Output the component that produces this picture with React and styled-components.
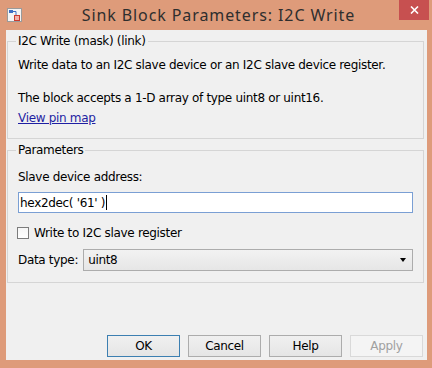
import React from 'react';
import styled, { createGlobalStyle } from 'styled-components';

const GlobalStyle = createGlobalStyle`
  html, body {
    margin: 0;
    padding: 0;
    background: #de9b7a;
  }
`;

const Window = styled.div`
  width: 432px;
  height: 368px;
  box-sizing: border-box;
  background: #de9b7a;
  display: flex;
  flex-direction: column;
  padding: 0 5px 8px 6px;
  font-family: 'DejaVu Sans', 'Liberation Sans', sans-serif;
  font-size: 12px;
  letter-spacing: -0.32px;
  color: #000;
`;

const TitleBar = styled.div`
  height: 30px;
  display: grid;
  grid-template-columns: 1fr auto 1fr;
  align-items: start;
  margin-right: -4px;
`;

const AppIcon = styled.svg`
  margin: 8px 0 0 1px;
  display: block;
`;

const Title = styled.div`
  font-family: 'Noto Sans', 'Open Sans', sans-serif;
  font-size: 16px;
  letter-spacing: 0.9px;
  color: #2e2e2e;
  line-height: 20px;
  padding-top: 5px;
  white-space: nowrap;
`;

const CloseButton = styled.div`
  justify-self: end;
  width: 30px;
  height: 20px;
  background: #c75050;
  color: #fff;
  display: flex;
  align-items: center;
  justify-content: center;
  margin-right: 2px;
`;

const Client = styled.div`
  flex: 1;
  background: #f0f0f0;
  display: flex;
  flex-direction: column;
  padding-top: 3px;
`;

const Group = styled.fieldset`
  margin: ${(p) => p.$top}px 3px 0 1px;
  padding: ${(p) => p.$padTop}px 10px ${(p) => p.$padBottom}px 10px;
  border: 1px solid #d5d5d5;
  min-width: 0;
`;

const Legend = styled.legend`
  padding: 0 2px;
  margin-left: -2px;
  line-height: 16px;
`;

const Line = styled.div`
  line-height: 16px;
  margin-top: ${(p) => p.$gap || 0}px;
  white-space: nowrap;
`;

const Link = styled.span`
  color: #1f1fa3;
  text-decoration: underline;
`;

const TextField = styled.div`
  margin-top: 7px;
  height: 21px;
  box-sizing: border-box;
  border: 1px solid #7a9fd4;
  background: #fff;
  padding: 0 1px;
  display: flex;
  align-items: center;
`;

const Caret = styled.span`
  display: inline-block;
  width: 1px;
  height: 15px;
  background: #000;
  margin-left: 1px;
`;

const CheckRow = styled.div`
  margin-top: 12px;
  height: 16px;
  display: flex;
  align-items: center;
`;

const CheckBox = styled.span`
  width: 12px;
  height: 12px;
  box-sizing: border-box;
  border: 1px solid #7c7c7c;
  background: linear-gradient(#f6f6f6, #ffffff);
  margin-left: -1px;
  margin-right: 5px;
`;

const SelectRow = styled.div`
  margin-top: 8px;
  display: flex;
  align-items: center;
  gap: 5px;
`;

const Select = styled.div`
  flex: 1;
  height: 22px;
  box-sizing: border-box;
  border: 1px solid #acacac;
  background: linear-gradient(#f2f2f2, #e6e6e6);
  display: flex;
  align-items: center;
  justify-content: space-between;
  padding: 0 6px 0 4px;
`;

const Arrow = styled.span`
  width: 0;
  height: 0;
  border-left: 3.5px solid transparent;
  border-right: 3.5px solid transparent;
  border-top: 4px solid #000;
`;

const Spacer = styled.div`
  flex: 1;
`;

const ButtonRow = styled.div`
  display: flex;
  justify-content: flex-end;
  gap: 8px;
  padding-right: 4px;
  margin-bottom: 3px;
`;

const Button = styled.div`
  width: 73px;
  height: 22px;
  box-sizing: border-box;
  display: flex;
  align-items: center;
  justify-content: center;
  border: 1px solid ${(p) => (p.$default ? '#3c7fb1' : p.$disabled ? '#d9d9d9' : '#acacac')};
  background: ${(p) => (p.$disabled ? '#f4f4f4' : 'linear-gradient(#f0f0f0, #e5e5e5)')};
  color: ${(p) => (p.$disabled ? '#a0a0a0' : '#000')};
`;

export default function App() {
  return (
    <Window>
      <GlobalStyle />
      <TitleBar>
        <AppIcon width="15" height="14" viewBox="0 0 15 14">
          <rect x="0.5" y="0.5" width="14" height="13" fill="#f4f4f4" stroke="#9a9a9a" />
          <rect x="2" y="2" width="4" height="3" fill="#3d6fc4" />
          <path d="M6 3.5 H9 V7" stroke="#3d6fc4" fill="none" />
          <rect x="7.5" y="7.5" width="5" height="5" fill="#f3b0a8" stroke="#cc3a2e" />
        </AppIcon>
        <Title>Sink Block Parameters: I2C Write</Title>
        <CloseButton>
          <svg width="9" height="8" viewBox="0 0 9 8">
            <path d="M1 0.5 L8 7.5 M8 0.5 L1 7.5" stroke="#fff" strokeWidth="1.6" />
          </svg>
        </CloseButton>
      </TitleBar>
      <Client>
        <Group $top={0} $padTop={8} $padBottom={12}>
          <Legend>I2C Write (mask) (link)</Legend>
          <Line>Write data to an I2C slave device or an I2C slave device register.</Line>
          <Line $gap={17}>The block accepts a 1-D array of type uint8 or uint16.</Line>
          <Line $gap={4}>
            <Link>View pin map</Link>
          </Line>
        </Group>
        <Group $top={3} $padTop={11} $padBottom={11}>
          <Legend>Parameters</Legend>
          <Line>Slave device address:</Line>
          <TextField>
            hex2dec( '61' )<Caret />
          </TextField>
          <CheckRow>
            <CheckBox />
            Write to I2C slave register
          </CheckRow>
          <SelectRow>
            Data type:
            <Select>
              uint8
              <Arrow />
            </Select>
          </SelectRow>
        </Group>
        <Spacer />
        <ButtonRow>
          <Button $default>OK</Button>
          <Button>Cancel</Button>
          <Button>Help</Button>
          <Button $disabled>Apply</Button>
        </ButtonRow>
      </Client>
    </Window>
  );
}
